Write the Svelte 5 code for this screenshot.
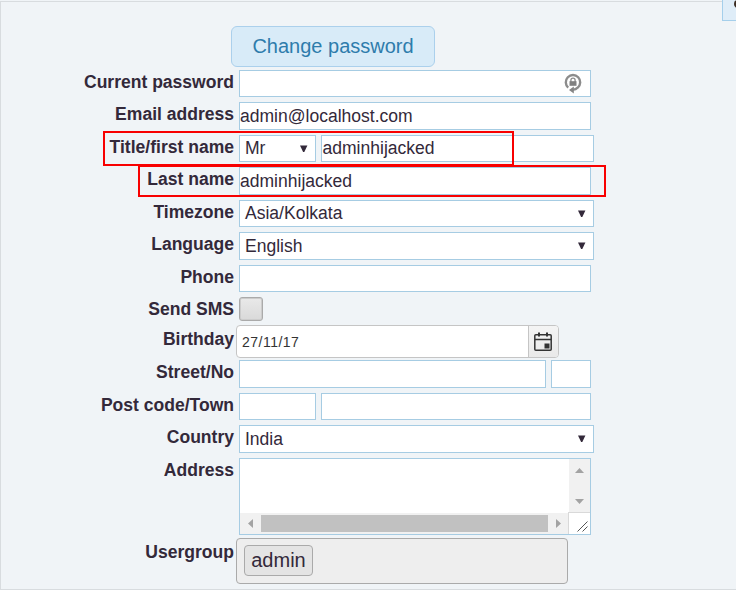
<script>
  const rows = [
    { label: 'Current password', kind: 'password', h: 27, gap: 5 },
    { label: 'Email address', kind: 'input', value: 'admin@localhost.com', h: 28, gap: 5 },
    { label: 'Title/first name', kind: 'name', h: 27, gap: 5 },
    { label: 'Last name', kind: 'input', value: 'adminhijacked', h: 28, gap: 5 },
    { label: 'Timezone', kind: 'select', value: 'Asia/Kolkata', h: 27, gap: 5 },
    { label: 'Language', kind: 'select', value: 'English', h: 28, gap: 5 },
    { label: 'Phone', kind: 'input', value: '', h: 27, gap: 5 },
    { label: 'Send SMS', kind: 'check', h: 24, gap: 4 },
    { label: 'Birthday', kind: 'date', h: 33, gap: 2 },
    { label: 'Street/No', kind: 'pair', first: 307, second: 40, h: 28, gap: 5 },
    { label: 'Post code/Town', kind: 'pair', first: 77, second: 270, h: 27, gap: 5 },
    { label: 'Country', kind: 'select', value: 'India', h: 28, gap: 5 },
    { label: 'Address', kind: 'area', h: 77, gap: 3 },
    { label: 'Usergroup', kind: 'group', h: 46, gap: 0 }
  ];
</script>

{#snippet arrow()}
  <svg class="arrow" width="8" height="8" viewBox="0 0 8 8"><path d="M0 .5h7.4L4.3 7H3.1z" fill="#33293a" /></svg>
{/snippet}

<main>
  <div class="corner"><i></i></div>
  <button class="change">Change password</button>
  <form>
    {#each rows as row}
      <div class="row" style="height:{row.h}px;margin-bottom:{row.gap}px">
        <div class="label" class:low={row.kind === 'date' || row.kind === 'group'}>{row.label}</div>
        {#if row.kind === 'password'}
          <div class="box std pw">
            <svg width="18" height="22" viewBox="0 0 18 22" fill="none">
              <path d="M4.2 14.6A7.2 7.2 0 1 1 13.8 14.6Q12 16.8 8.5 16.9" stroke="#8c8c8c" stroke-width="2.4" />
              <path d="M5 16.9 9.8 13.4V20.6z" fill="#858585" />
              <path d="M6.9 9V7.2a2.1 2.1 0 0 1 4.2 0V9" stroke="#8a8a8a" stroke-width="1.3" />
              <path d="M5.5 8.2h7v4.6h-7z" fill="#808080" />
            </svg>
          </div>
        {:else if row.kind === 'input'}
          <div class="box std">{row.value}</div>
        {:else if row.kind === 'name'}
          <div class="box sel title">Mr{@render arrow()}</div>
          <div class="box first">adminhijacked</div>
        {:else if row.kind === 'select'}
          <div class="box sel wide">{row.value}{@render arrow()}</div>
        {:else if row.kind === 'check'}
          <div class="check"></div>
        {:else if row.kind === 'date'}
          <div class="date">
            <span>27/11/17</span>
            <div class="cal">
              <svg width="18" height="20" viewBox="0 0 18 20" fill="none">
                <rect x=".8" y="2.7" width="16.4" height="15.6" rx="1" stroke="#333" stroke-width="1.5" />
                <path d="M1 7.5h16" stroke="#333" stroke-width="1.4" />
                <path d="M4 .5h2v4H4zM12 .5h2v4h-2zM10.5 11.5h5v5h-5z" fill="#333" />
              </svg>
            </div>
          </div>
        {:else if row.kind === 'pair'}
          <div class="box" style="width:{row.first}px"></div>
          <div class="box second" style="width:{row.second}px"></div>
        {:else if row.kind === 'area'}
          <div class="box std area">
            <div class="pane"></div>
            <div class="vbar">
              <svg width="9" height="5"><path d="M4.5 0 9 5H0z" fill="#a3a3a3" /></svg>
              <svg width="9" height="5"><path d="M0 0h9L4.5 5z" fill="#a3a3a3" /></svg>
            </div>
            <div class="hbar">
              <svg width="5" height="9"><path d="M5 0v9L0 4.5z" fill="#a3a3a3" /></svg>
              <div class="thumb"></div>
              <svg width="5" height="9"><path d="M0 0v9l5-4.5z" fill="#a3a3a3" /></svg>
            </div>
            <div class="grip">
              <svg width="11" height="11" viewBox="0 0 11 11"><path d="M.5 10.5l10-10M5.5 10.5l5-5" stroke="#555" stroke-width="1" /></svg>
            </div>
          </div>
        {:else}
          <div class="group"><span>admin</span></div>
        {/if}
      </div>
    {/each}
  </form>
  <div class="mark one"></div>
  <div class="mark two"></div>
</main>

<style>
  :global(body) { background: #f0f4f7; }
  * { box-sizing: border-box; }
  main {
    position: relative;
    width: 736px;
    height: 590px;
    padding: 26px 0 0;
    overflow: hidden;
    background: #f0f4f7;
    font-family: "Liberation Sans", Arial, sans-serif;
    font-size: 17.55px;
    color: #33293a;
  }
  main::before {
    content: "";
    position: absolute;
    inset: 1px -1px 0 0;
    border: 1px solid #d8dcdf;
  }
  .corner {
    position: absolute;
    z-index: 1;
    top: -5px;
    left: 722px;
    width: 30px;
    height: 26px;
    background: #dfedf8;
    border: 1px solid #a5cfeb;
    overflow: hidden;
  }
  .corner i {
    position: absolute;
    left: 11px;
    top: 4px;
    width: 10px;
    height: 8px;
    border-radius: 5px;
    background: #3b2b20;
  }
  .change {
    position: relative;
    display: block;
    width: 204px;
    height: 41px;
    margin: 0 0 3px 231px;
    padding: 0 0 1px;
    border: 1px solid #abd0ec;
    border-radius: 6px;
    background: #d8ebf8;
    color: #2e7cac;
    font: 20px "Liberation Sans", Arial, sans-serif;
  }
  form { position: relative; }
  .row { display: flex; }
  .label {
    width: 234px;
    margin-right: 5px;
    flex: none;
    font-weight: bold;
    line-height: 24px;
    text-align: right;
    white-space: nowrap;
  }
  .low { line-height: 28px; margin-right: 2px; }
  .box {
    flex: none;
    height: 100%;
    display: flex;
    align-items: center;
    background: #fff;
    border: 1px solid #a6cce3;
    white-space: nowrap;
  }
  .std { width: 352px; }
  .pw { justify-content: flex-end; padding-right: 8px; }
  .sel { justify-content: space-between; padding: 0 7px 0 5px; }
  .wide { width: 355px; }
  .title { width: 77px; }
  .first { width: 273px; margin-left: 5px; padding-left: .5px; }
  .second { margin-left: 5px; }
  .check {
    width: 24px;
    height: 24px;
    border: 1px solid #aaa;
    border-radius: 3px;
    background: linear-gradient(#e9e9e9, #d9d9d9);
    box-shadow: inset 0 0 0 1px #ccc;
  }
  .date {
    width: 323px;
    height: 33px;
    display: flex;
    border: 1px solid #c5c5c5;
    border-radius: 4px;
    background: #fff;
    overflow: hidden;
    font-size: 14px;
    line-height: 32px;
    color: #333;
  }
  .date span { flex: 1; padding-left: 5px; letter-spacing: .48px; }
  .cal {
    width: 30px;
    display: flex;
    align-items: center;
    padding-left: 5px;
    border-left: 1px solid #c5c5c5;
    background: linear-gradient(#f4f4f4, #e9e9e9);
  }
  .area { display: grid; grid-template: 54px 21px / 329px 21px; align-items: stretch; }
  .vbar {
    display: flex;
    flex-direction: column;
    justify-content: space-between;
    align-items: center;
    padding: 9px 0;
    background: #f1f1f1;
  }
  .hbar { display: flex; align-items: center; justify-content: space-between; padding: 0 8px; background: #f1f1f1; }
  .thumb { width: 287px; height: 17px; background: #c1c1c1; }
  .grip {
    display: flex;
    align-items: flex-end;
    justify-content: flex-end;
    padding: 0 2px 2px 0;
    margin: -1px 0 0 -1px;
    border: solid #d9d9d9;
    border-width: 1px 0 0 1px;
    background: #fff;
  }
  .group {
    width: 332px;
    height: 46px;
    padding: 6px 7px;
    border: 1px solid #aaa;
    border-radius: 4px;
    background: #eee;
  }
  .group span {
    display: block;
    width: 69px;
    height: 31px;
    border: 1px solid #aaa;
    border-radius: 4px;
    background: #e4e4e4;
    font-size: 20px;
    line-height: 28px;
    text-align: center;
  }
  .mark { position: absolute; border: 2px solid #f80000; }
  .one { left: 103px; top: 131px; width: 411px; height: 35px; }
  .two { left: 138px; top: 165px; width: 468px; height: 32px; }
</style>
